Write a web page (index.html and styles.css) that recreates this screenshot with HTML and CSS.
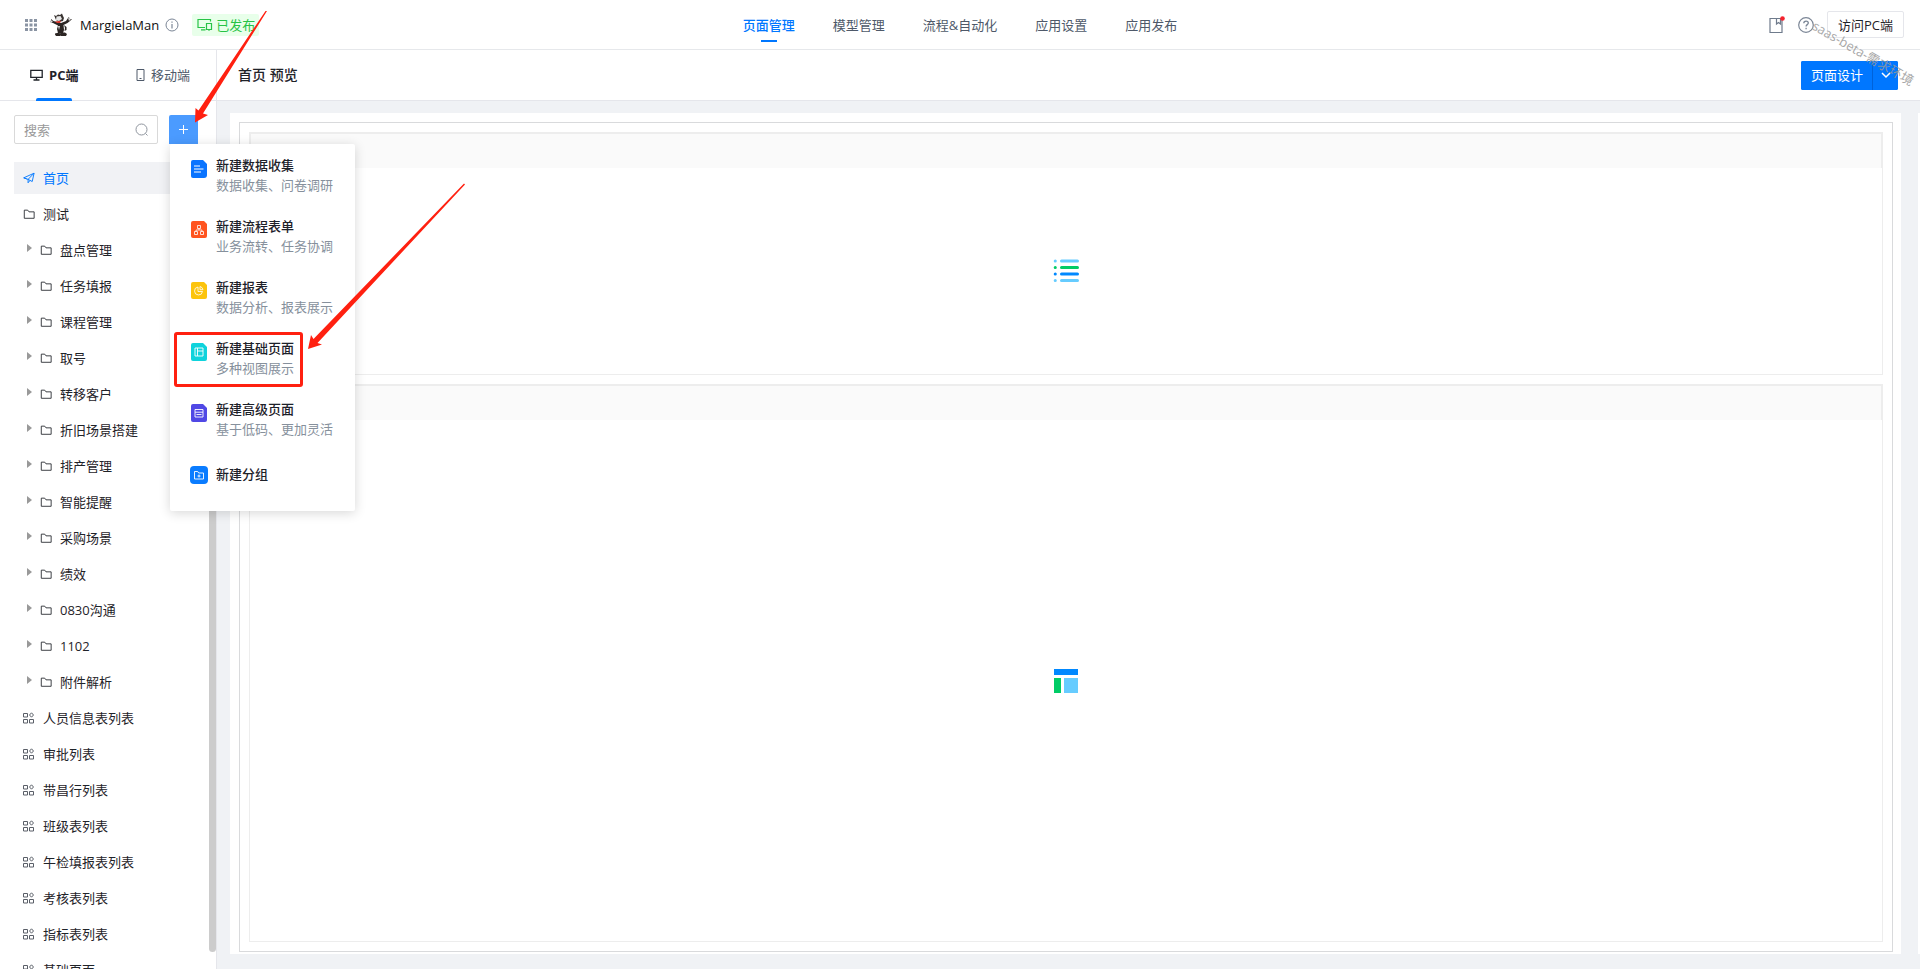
FILE: index.html
```html
<!DOCTYPE html>
<html lang="zh-CN">
<head>
<meta charset="utf-8">
<title>页面管理</title>
<link rel="stylesheet" href="styles.css">
</head>
<body>
<svg class="defs" width="0" height="0" aria-hidden="true">
  <symbol id="folder" viewBox="0 0 14 12"><path d="M1.500 1.500h4l1.500 2h6v7.500h-11.500z" fill="none" stroke="currentColor" stroke-linejoin="round"/></symbol>
  <symbol id="blocks" viewBox="0 0 12 12"><path d="M.5 1.500h4v3.500h-4zM.5 7.500h4v3.500h-4zM6.500 7.500h4v3.500h-4zM8.500.8l2 2.200-2 2.200-2-2.200z" fill="none" stroke="#5a5f68"/></symbol>
</svg>
<header class="topbar">
  <div class="brand">
    <svg class="dots" width="12" height="12" viewBox="0 0 12 12"><path d="M0 0h3v3H0zM4.500 0h3v3h-3zM9 0h3v3H9zM0 4.500h3v3H0zM4.500 4.500h3v3h-3zM9 4.500h3v3H9zM0 9h3v3H0zM4.500 9h3v3h-3zM9 9h3v3H9z" fill="#8a94a3"/></svg>
    <svg class="logo" width="22" height="24" viewBox="0 0 22 24">
      <path d="M4 2l2 1 2-1.500L10 2l2-1.500L13 3l1 2-1 3-4 1-3-2z" fill="#3a3432"/>
      <path d="M6.500 3.500l4-.5 1.500 3-3 2-3-1z" fill="#e8e8e8"/>
      <path d="M1 6l2.500 2L7 9l4 1 5-2 2-3 1-1 .5 2L22 6l-2 2-2.500 2-4 2L14 17l-1 3H8l-1-4 1-3.500L3 10 0 9l1-1z" fill="#2b2523"/>
      <path d="M5 8.500l6-.8-1 2.300H7z" fill="#d8352b"/>
      <path d="M0 7l3 1-2 2zM18 5l3 1-2 2zM8 13h2l-1 4z" fill="#ddd"/>
      <path d="M5 20.500l4-1 1 1 1-1h4l2 1.500-1 2h-5l-.500-.5-.5.500H6l-1-1.500z" fill="#2b2523"/>
      <path d="M14 12l2.500 2v3l-2 1 .5-3z" fill="#2b2523"/>
    </svg>
    <span class="app-name">MargielaMan</span>
    <svg class="info" width="14" height="14" viewBox="0 0 14 14"><circle cx="7" cy="7" r="6" fill="none" stroke="#7b8696"/><path d="M7 6v4.500M7 3.500v1.300" stroke="#7b8696" stroke-width="1.200"/></svg>
    <span class="status">
      <svg width="16" height="13" viewBox="0 0 16 13"><path d="M8 9.500H1v-8h12.500v2M4 11.800h4.500M9.500 5.500h5v6h-5zM11 11.800h2" fill="none" stroke="#27c346" stroke-width="1.200"/></svg>已发布
    </span>
  </div>
  <nav class="mainnav">
    <a href="#" class="current">页面管理</a>
    <a href="#">模型管理</a>
    <a href="#">流程&amp;自动化</a>
    <a href="#">应用设置</a>
    <a href="#">应用发布</a>
  </nav>
  <div class="tools">
    <svg class="book" width="16" height="18" viewBox="0 0 16 18"><path d="M1 2.500h12v14H1zM7.500 2.500v5.500l2-1.500 2 1.500V2.500" fill="none" stroke="#6f7b8c" stroke-width="1.200"/><circle cx="13.500" cy="2.500" r="2.300" fill="#f5222d"/></svg>
    <svg class="help" width="16" height="16" viewBox="0 0 16 16"><circle cx="8" cy="8" r="7.300" fill="none" stroke="#7b8696" stroke-width="1.200"/><path d="M5.800 6.300c0-3 4.500-2.800 4.500-.2 0 1.500-2.200 1.600-2.200 3.300M8.100 10.800v1.400" fill="none" stroke="#7b8696" stroke-width="1.300"/></svg>
    <button class="visit" type="button">访问PC端</button>
  </div>
  <span class="watermark" aria-hidden="true">saas-beta-需求环境</span>
</header>

<div class="shell">
  <aside class="side">
    <div class="tabs">
      <button class="tab on" type="button"><svg width="13" height="12" viewBox="0 0 13 12"><path d="M.8 1.300h11.400v7H.8zM6.500 8v2.700M3.500 11h6" fill="none" stroke="currentColor" stroke-width="1.300"/></svg>PC端</button>
      <button class="tab" type="button"><svg width="9" height="12" viewBox="0 0 9 12"><path d="M1 .5h7v11H1zM3.500 9.500h2" fill="none" stroke="currentColor"/></svg>移动端</button>
    </div>
    <div class="finder">
      <label class="search">
        <input type="text" placeholder="搜索" aria-label="搜索">
        <svg width="14" height="14" viewBox="0 0 14 14"><circle cx="6.500" cy="6.500" r="5.500" fill="none" stroke="#8f959e"/><path d="M10.500 10.500l2 2" stroke="#8f959e"/></svg>
      </label>
      <button class="add" type="button" aria-label="新建"><svg width="9" height="9" viewBox="0 0 9 9"><path d="M4.500 0v9M0 4.500h9" stroke="#fff"/></svg></button>
      <div class="menu">
        <a href="#"><svg width="18" height="18" viewBox="0 0 18 18"><path d="M3 0h10l4 4v11a3 3 0 0 1-3 3H3a2 2 0 0 1-2-2V2a2 2 0 0 1 2-2z" fill="#0a74ff"/><path d="M4 6h6M4 9h9.500M4 12h7" stroke="#fff"/></svg><span><b>新建数据收集</b><small>数据收集、问卷调研</small></span></a>
        <a href="#"><svg width="18" height="18" viewBox="0 0 18 18"><path d="M3 0h11l3 3v12a2 2 0 0 1-2 2H3a2 2 0 0 1-2-2V2a2 2 0 0 1 2-2z" fill="#ff541f"/><path d="M7.500 4.500h3v3h-3zM4.500 10.500h3v3h-3zM10.500 10.500h3v3h-3zM9 7.500v1.500M6 10.500V9h6v1.500" fill="none" stroke="#fff" stroke-width=".8"/></svg><span><b>新建流程表单</b><small>业务流转、任务协调</small></span></a>
        <a href="#"><svg width="18" height="18" viewBox="0 0 18 18"><path d="M3 0h11l3 3v12a2 2 0 0 1-2 2H3a2 2 0 0 1-2-2V2a2 2 0 0 1 2-2z" fill="#fcc40c"/><path d="M8 5a4 4 0 1 0 4.500 4.500H8zM10 4.500a4 4 0 0 1 3 3.200h-3z" fill="none" stroke="#fff" stroke-width=".8"/></svg><span><b>新建报表</b><small>数据分析、报表展示</small></span></a>
        <a href="#"><svg width="18" height="18" viewBox="0 0 18 18"><path d="M3 0h10l4 4v12a2 2 0 0 1-2 2H3a2 2 0 0 1-2-2V2a2 2 0 0 1 2-2z" fill="#0fd3dc"/><path d="M5 5h8v8H5zM7.500 5v8M7.500 8H13" fill="none" stroke="#fff" stroke-width=".9"/></svg><span><b>新建基础页面</b><small>多种视图展示</small></span></a>
        <a href="#"><svg width="18" height="18" viewBox="0 0 18 18"><path d="M3 0h10l4 4v12a2 2 0 0 1-2 2H3a2 2 0 0 1-2-2V2a2 2 0 0 1 2-2z" fill="#5048e5"/><path d="M5 5.500h8V13H5zM5 8.200h8M6.500 10.500h5" fill="none" stroke="#fff" stroke-width=".9"/></svg><span><b>新建高级页面</b><small>基于低码、更加灵活</small></span></a>
        <a href="#"><svg width="18" height="18" viewBox="0 0 18 18"><rect width="18" height="18" rx="4" fill="#0a7cff"/><path d="M4.500 5.500h3.200l1 1.500h4.800v6h-9zM9 8.500v3M7.500 10h3" fill="none" stroke="#fff" stroke-width=".9"/></svg><span><b>新建分组</b></span></a>
      </div>
    </div>
    <div class="tree">
      <ul>
        <li class="active"><svg width="13" height="12" viewBox="0 0 13 12"><path d="M.8 5.800L12 .8l-2 9-4.500-2.300zM12 .8L5.500 7.500v3.700l2-2.500M.8 5.800L4 7" fill="none" stroke="currentColor" stroke-linejoin="round"/></svg>首页</li>
        <li><svg width="14" height="12"><use href="#folder"/></svg>测试</li>
        <li class="sub"><svg width="14" height="12"><use href="#folder"/></svg>盘点管理</li>
        <li class="sub"><svg width="14" height="12"><use href="#folder"/></svg>任务填报</li>
        <li class="sub"><svg width="14" height="12"><use href="#folder"/></svg>课程管理</li>
        <li class="sub"><svg width="14" height="12"><use href="#folder"/></svg>取号</li>
        <li class="sub"><svg width="14" height="12"><use href="#folder"/></svg>转移客户</li>
        <li class="sub"><svg width="14" height="12"><use href="#folder"/></svg>折旧场景搭建</li>
        <li class="sub"><svg width="14" height="12"><use href="#folder"/></svg>排产管理</li>
        <li class="sub"><svg width="14" height="12"><use href="#folder"/></svg>智能提醒</li>
        <li class="sub"><svg width="14" height="12"><use href="#folder"/></svg>采购场景</li>
        <li class="sub"><svg width="14" height="12"><use href="#folder"/></svg>绩效</li>
        <li class="sub"><svg width="14" height="12"><use href="#folder"/></svg>0830沟通</li>
        <li class="sub"><svg width="14" height="12"><use href="#folder"/></svg>1102</li>
        <li class="sub"><svg width="14" height="12"><use href="#folder"/></svg>附件解析</li>
        <li><svg width="12" height="12"><use href="#blocks"/></svg>人员信息表列表</li>
        <li><svg width="12" height="12"><use href="#blocks"/></svg>审批列表</li>
        <li><svg width="12" height="12"><use href="#blocks"/></svg>带昌行列表</li>
        <li><svg width="12" height="12"><use href="#blocks"/></svg>班级表列表</li>
        <li><svg width="12" height="12"><use href="#blocks"/></svg>午检填报表列表</li>
        <li><svg width="12" height="12"><use href="#blocks"/></svg>考核表列表</li>
        <li><svg width="12" height="12"><use href="#blocks"/></svg>指标表列表</li>
        <li><svg width="12" height="12"><use href="#blocks"/></svg>基础页面</li>
      </ul>
      <div class="thumb"></div>
    </div>
  </aside>

  <main class="main">
    <div class="titlebar">
      <h1>首页 预览</h1>
      <div class="split">
        <button type="button">页面设计</button>
        <button class="more" type="button" aria-label="更多"><svg width="10" height="7" viewBox="0 0 10 7"><path d="M1 1l4 4 4-4" fill="none" stroke="#fff" stroke-width="1.500"/></svg></button>
      </div>
    </div>
    <div class="canvas">
      <div class="sheet">
        <div class="frame">
          <section class="card short">
            <div class="card-head"></div>
            <div class="card-body"><svg width="26" height="24" viewBox="0 0 26 24"><g stroke-width="3" stroke-linecap="round"><path d="M2.200 2h.1M8.500 2h16M2.200 21.500h.1M8.500 21.500h16" stroke="#66ccff"/><path d="M2.200 8.500h.1M8.500 8.500h16" stroke="#00cc66"/><path d="M2.200 15h.1M8.500 15h16" stroke="#0088ff"/></g></svg></div>
          </section>
          <section class="card tall">
            <div class="card-head"></div>
            <div class="card-body"><svg width="24" height="24" viewBox="0 0 24 24"><path d="M0 0h24v6H0z" fill="#0088ff"/><path d="M0 9h7v15H0z" fill="#00cc66"/><path d="M10 9h14v15H10z" fill="#66ccff"/></svg></div>
          </section>
        </div>
      </div>
      <div class="edge"></div>
    </div>
  </main>
</div>

<div class="mark-box"></div>
<svg class="marks" width="480" height="360" viewBox="0 0 480 360" aria-hidden="true">
  <path d="M267 11L203 113.500 208 115 195 122.500 195.500 108 198.500 110.500 265.500 11z" fill="#ff2010"/>
  <path d="M465 184.500L317.500 343 322 344.500 308 349 311 335 313.500 339 464 183.500z" fill="#ff2010"/>
</svg>
</body>
</html>
```
FILE: styles.css
```css
* { box-sizing: border-box; }

body {
  margin: 0;
  height: 100vh;
  display: flex;
  flex-direction: column;
  overflow: hidden;
  background: #fff;
  color: #1f2329;
  font: 13px/20px "Open Sans", "Noto Sans CJK SC", sans-serif;
}

svg { display: block; flex: none; }
.defs { position: absolute; }
a { color: inherit; text-decoration: none; }
button, input { font: inherit; color: inherit; margin: 0; }
button { cursor: pointer; white-space: nowrap; }

/* top bar */
.topbar {
  position: relative;
  flex: none;
  display: grid;
  grid-template-columns: 1fr auto 1fr;
  align-items: center;
  height: 50px;
  border-bottom: 1px solid #e6e8eb;
}
.brand { display: flex; align-items: center; padding-left: 25px; }
.logo { margin: 0 8px 0 13px; }
.app-name { color: #111; }
.info { margin: 0 13px 0 6px; }
.status {
  display: flex;
  align-items: center;
  gap: 3px;
  height: 22px;
  padding: 0 4px 0 5px;
  border-radius: 2px;
  background: #e8ffea;
  color: #27c346;
}
.mainnav { display: flex; gap: 38px; height: 49px; color: #4e5969; }
.mainnav a {
  display: flex;
  flex-direction: column;
  align-items: center;
  padding-top: 15px;
}
.mainnav .current { color: #0077ff; font-weight: 500; }
.mainnav .current::after {
  content: "";
  width: 16px;
  height: 2px;
  margin-top: 5px;
  background: #0077ff;
}
.tools { display: flex; align-items: center; justify-content: flex-end; padding-right: 16px; }
.help { margin: 0 13px; }
.visit {
  height: 27px;
  padding: 0 10px;
  border: 1px solid #e5e6eb;
  border-radius: 2px;
  background: #fff;
}
.watermark {
  position: absolute;
  z-index: 3;
  right: 0;
  top: 43px;
  color: #999;
  opacity: .85;
  transform: rotate(30deg);
  white-space: nowrap;
  pointer-events: none;
}

.shell { flex: 1; display: flex; min-height: 0; }

/* sidebar */
.side {
  flex: none;
  display: flex;
  flex-direction: column;
  width: 217px;
  border-right: 1px solid #e5e6eb;
}
.tabs {
  flex: none;
  display: flex;
  justify-content: space-between;
  height: 51px;
  padding: 0 26px 0 30px;
  border-bottom: 1px solid #e5e6eb;
}
.tab {
  position: relative;
  display: flex;
  align-items: center;
  gap: 6px;
  padding: 0;
  border: 0;
  background: none;
  color: #4e5969;
}
.tab.on { color: #1f2329; font-weight: 700; }
.tab.on::after {
  content: "";
  position: absolute;
  left: 6px;
  bottom: -1px;
  width: 36px;
  height: 3px;
  border-radius: 2px 2px 0 0;
  background: #0077ff;
}
.finder {
  position: relative;
  flex: none;
  display: flex;
  justify-content: space-between;
  padding: 14px 18px 0 14px;
}
.search {
  display: flex;
  align-items: center;
  width: 144px;
  height: 29px;
  padding: 0 8px 0 9px;
  border: 1px solid #d9d9d9;
  border-radius: 2px;
}
.search input {
  flex: 1;
  min-width: 0;
  padding: 0;
  border: 0;
  outline: 0;
  background: none;
}
.search input::placeholder { color: #999; opacity: 1; }
.add {
  display: grid;
  place-items: center;
  width: 29px;
  height: 29px;
  padding: 0;
  border: 0;
  border-radius: 2px 2px 0 0;
  background: #4b9bff;
}
.menu {
  position: absolute;
  z-index: 2;
  left: 170px;
  top: 43px;
  width: 185px;
  padding: 11px 20px;
  border-radius: 2px;
  background: #fff;
  box-shadow: 0 2px 12px rgba(0, 0, 0, .16);
}
.menu a { display: flex; gap: 8px; height: 61px; white-space: nowrap; }
.menu a svg { margin-top: 5px; }
.menu a:last-child { height: 36px; margin-top: 4px; }
.menu a:last-child svg { margin-top: 2px; }
.menu b, .menu small { display: block; font-size: 13px; }
.menu b { font-weight: 500; color: #1d2129; }
.menu small { color: #86909c; }

.tree {
  flex: 1;
  display: flex;
  min-height: 0;
  overflow: hidden;
  padding-top: 18px;
}
.tree ul { flex: 1; margin: 0; padding: 0 0 0 14px; list-style: none; }
.tree li {
  display: flex;
  align-items: center;
  height: 32px;
  margin-bottom: 4px;
  padding-left: 9px;
  white-space: nowrap;
}
.tree li svg { width: 12px; margin-right: 8px; }
.tree .active { background: #f1f2f5; color: #0077ff; }
.tree .sub::before {
  content: "";
  margin: 0 8px 5px 4px;
  border: solid transparent;
  border-width: 4px 0 4px 5px;
  border-left-color: #999;
}
.thumb {
  width: 7px;
  margin-bottom: 17px;
  border-radius: 4px;
  background: #ccc;
}

/* main area */
.main { flex: 1; display: flex; flex-direction: column; min-width: 0; }
.titlebar {
  flex: none;
  display: flex;
  align-items: center;
  justify-content: space-between;
  height: 51px;
  padding: 0 22px 0 21px;
  border-bottom: 1px solid #e5e6eb;
}
.titlebar h1 { margin: 0; font-size: 14px; font-weight: 500; }
.split { display: flex; gap: 1px; height: 29px; border-radius: 2px; background: #0062d9; overflow: hidden; }
.split button { padding: 0 9px 0 10px; border: 0; background: #0077ff; color: #fff; }
.split .more { display: grid; place-items: center; width: 25px; padding: 0; }
.canvas {
  flex: 1;
  display: flex;
  gap: 17px;
  min-height: 0;
  padding: 12px 0 15px 13px;
  background: #f0f2f5;
}
.sheet { flex: 1; padding: 9px 8px 2px 9px; background: #fff; }
.edge { width: 2px; background: #fff; }
.frame {
  display: flex;
  flex-direction: column;
  gap: 9px;
  height: 100%;
  padding: 9px;
  border: 1px solid #d9dadc;
}
.card { display: flex; flex-direction: column; border: 1px solid #ededed; }
.short { flex: none; height: 243px; }
.tall { flex: 1; }
.card-head { height: 35px; border: solid #ededed; border-width: 1px 1px 0; background: #fafafa; }
.card-body { flex: 1; display: grid; place-items: center; }

/* callouts */
.mark-box {
  position: absolute;
  z-index: 4;
  left: 174px;
  top: 332px;
  width: 129px;
  height: 55px;
  border: 3px solid #ff2010;
  border-radius: 3px;
}
.marks { position: absolute; z-index: 5; left: 0; top: 0; pointer-events: none; }
```
